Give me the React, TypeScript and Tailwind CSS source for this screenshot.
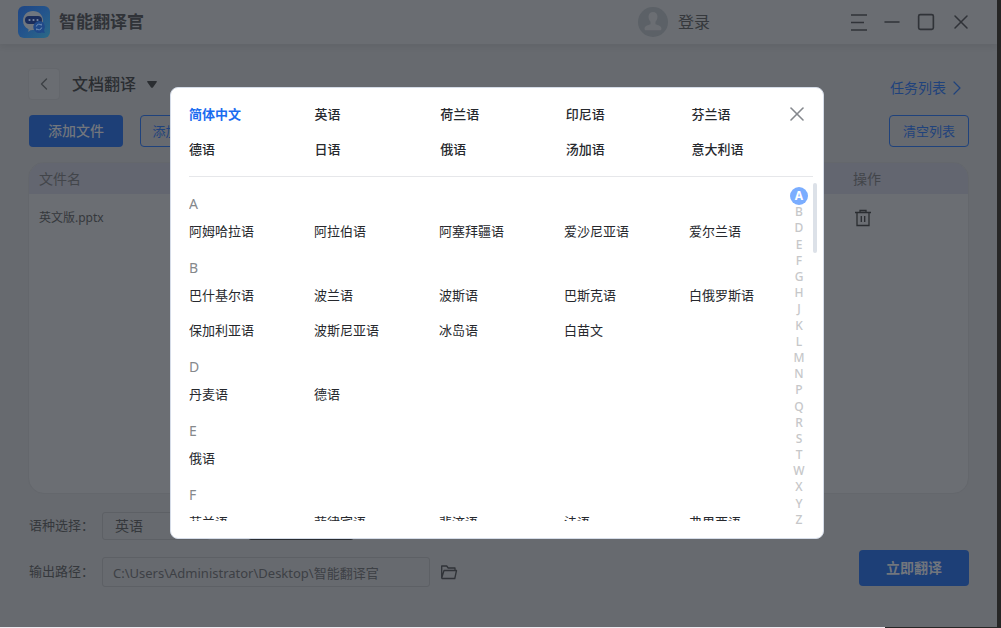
import { ChevronLeft, ChevronRight, Minus, Square, X } from "lucide-react";

const COMMON = [
  "简体中文", "英语", "荷兰语", "印尼语", "芬兰语",
  "德语", "日语", "俄语", "汤加语", "意大利语",
];

const GROUPS = [
  { letter: "A", items: ["阿姆哈拉语", "阿拉伯语", "阿塞拜疆语", "爱沙尼亚语", "爱尔兰语"] },
  {
    letter: "B",
    items: [
      "巴什基尔语", "波兰语", "波斯语", "巴斯克语", "白俄罗斯语",
      "保加利亚语", "波斯尼亚语", "冰岛语", "白苗文",
    ],
  },
  { letter: "D", items: ["丹麦语", "德语"] },
  { letter: "E", items: ["俄语"] },
  { letter: "F", items: ["芬兰语", "菲律宾语", "斐济语", "法语", "弗里西语"] },
];

const LETTERS = "ABDEFGHJKLMNPQRSTWXYZ".split("");

function Logo() {
  return (
    <svg viewBox="0 0 32 32" className="size-8" aria-hidden="true">
      <defs>
        <linearGradient id="logo-bg" x1="0" y1="0" x2="1" y2="1">
          <stop offset="0" stopColor="#1f4684" />
          <stop offset="0.5" stopColor="#23548c" />
          <stop offset="1" stopColor="#2c6a86" />
        </linearGradient>
      </defs>
      <rect width="32" height="32" rx="6" fill="url(#logo-bg)" />
      <path
        d="M15 5c6 0 10 4.200 10 9.500S21 24 15 24l-2.500.2-2.200 1.800.2-2.800C7 21.500 5 18.800 5 14.800 5 9.200 9 5 15 5Z"
        fill="#6f767f"
      />
      <rect x="7" y="10" width="17" height="8" rx="4" fill="#1a2d5c" />
      <g fill="#7887a4">
        <circle cx="11.500" cy="14" r="1.100" />
        <circle cx="15.500" cy="14" r="1.100" />
        <circle cx="19.500" cy="14" r="1.100" />
      </g>
      <path d="M21 15a6 6 0 0 1 5 9.300l.8 2.700-2.900-.6A6 6 0 1 1 21 15Z" fill="#204989" />
      <path
        d="M18.300 20.500a2.800 2.800 0 0 1 5-1.200v-1.500M23.700 21.500a2.800 2.800 0 0 1-5 1.200v1.500"
        fill="none"
        stroke="#6e8db5"
        strokeWidth="1"
      />
    </svg>
  );
}

function Avatar() {
  return (
    <svg viewBox="0 0 30 30" className="size-[30px]" aria-hidden="true">
      <circle cx="15" cy="15" r="15" fill="#5c6167" />
      <path
        d="M15 5c2.700 0 4.500 2 4.500 4.600 0 2.200-.8 4-2 5.200v2.400c2.500.8 6 1.600 6 4.500 0 .9-.5 1.500-1.300 1.500H7.800c-.8 0-1.300-.6-1.300-1.500 0-2.900 3.500-3.700 6-4.500v-2.400c-1.200-1.200-2-3-2-5.200C10.500 7 12.300 5 15 5Z"
        fill="#6b6e73"
      />
    </svg>
  );
}

function TitleBar() {
  return (
    <header className="flex h-11 shrink-0 items-center bg-[#6a6d72] pr-[27px] pl-[18px] shadow-[0_3px_6px_rgba(0,0,0,0.06)]">
      <Logo />
      <h1 className="ml-[9px] text-[17px] font-bold text-[#303338]">智能翻译官</h1>
      <button className="ml-auto flex items-center gap-[10px] text-base text-[#35383c]">
        <Avatar />
        登录
      </button>
      <div className="ml-[140px] flex items-center gap-[17px] text-[#303338]">
        <button aria-label="菜单">
          <svg viewBox="0 0 17 18" className="h-[18px] w-[17px]" stroke="currentColor" strokeWidth="1.500">
            <path d="M1 2h16M1 9.500h13M1 17h16" />
          </svg>
        </button>
        <button aria-label="最小化">
          <Minus className="h-[18px] w-4" viewBox="4 3 16 18" strokeWidth={1.5} />
        </button>
        <button aria-label="最大化">
          <Square className="size-[18px]" viewBox="1 1 22 22" strokeWidth={2} rx={1} />
        </button>
        <button aria-label="关闭">
          <X className="size-[18px]" viewBox="3 3 18 18" strokeWidth={1.5} />
        </button>
      </div>
    </header>
  );
}

function FileTable() {
  return (
    <div className="mt-[15px] min-h-[332px] flex-1 overflow-hidden rounded-2xl border border-[#64676c] bg-[#6b6e73]">
      <table className="w-full table-fixed text-left">
        <thead className="bg-[#636670] text-sm text-[#42454a]">
          <tr className="h-[31px]">
            <th className="pl-[10px] font-normal">文件名</th>
            <th className="w-[115px] font-normal">操作</th>
          </tr>
        </thead>
        <tbody className="text-xs text-[#35383c]">
          <tr className="h-12">
            <td className="pl-[10px]">英文版.pptx</td>
            <td>
              <button aria-label="删除" className="ml-px block">
                <svg viewBox="0 0 18 18" className="size-[18px]" fill="none" stroke="#2a2d31" strokeWidth="1.300">
                  <path d="M1 3.500h16M6 3.500V1.500h6v2M3 3.500V16.500h12V3.500M7.300 7v6M10.700 7v6" />
                </svg>
              </button>
            </td>
          </tr>
        </tbody>
      </table>
    </div>
  );
}

function OutputForm() {
  return (
    <form className="mt-[18px] flex items-end justify-between pl-px">
      <div className="flex flex-col gap-[17px] text-[13px] text-[#35383c]">
        <div className="flex items-center">
          <label htmlFor="source" className="w-[73px]">语种选择：</label>
          <select
            id="source"
            className="h-7 w-[108px] appearance-none rounded-[3px] border border-[#5d6065] pl-3 text-sm"
          >
            <option>英语</option>
          </select>
          <select
            aria-label="目标语言"
            className="ml-[38px] h-7 w-[106px] appearance-none rounded-[3px] border border-[#2a2d31] pl-3 text-sm"
          >
            <option>简体中文</option>
          </select>
        </div>
        <div className="flex items-center">
          <label htmlFor="path" className="w-[73px]">输出路径：</label>
          <input
            id="path"
            readOnly
            value="C:\Users\Administrator\Desktop\智能翻译官"
            className="h-[30px] w-[328px] rounded-[3px] border border-[#5d6065] px-[10px] text-[13px] text-[#3d4045]"
          />
          <button type="button" aria-label="打开文件夹" className="ml-[10px]">
            <svg viewBox="0 0 18 18" className="size-[18px]" fill="none" stroke="#303338" strokeWidth="1.300" strokeLinejoin="round">
              <path d="M1.700 15V3h5l1.500 2H15v2.500M1.700 15l2.300-7.500h12.500L14.800 15.500H2Z" />
            </svg>
          </button>
        </div>
      </div>
      <button type="button" className="mb-px h-9 w-[110px] rounded bg-[#1d3f77] text-sm font-bold text-[#72767d]">
        立即翻译
      </button>
    </form>
  );
}

function LanguageDialog() {
  return (
    <div
      role="dialog"
      aria-label="选择语种"
      className="relative flex h-[452px] w-[654px] flex-col rounded-lg border border-[#d5dce8] bg-white text-[13px] text-[#26282d]"
    >
      <div className="pt-[9px] pr-[6px] pl-[18px]">
        <div className="grid grid-cols-5">
          {COMMON.map((name, i) => (
            <button
              key={name}
              className={i === 0 ? "h-[35px] text-left font-bold text-[#1a6cf0]" : "h-[35px] text-left font-medium"}
            >
              {name}
            </button>
          ))}
        </div>
      </div>
      <button aria-label="关闭" className="absolute top-[18px] right-[18px] text-[#85888d]">
        <X className="size-4" viewBox="4 4 16 16" strokeWidth={1.6} />
      </button>
      <div className="mt-[9px] mr-[10px] ml-[18px] border-t border-[#e6e7ea]" />
      <div className="flex min-h-0 flex-1 pr-[6px] pl-[18px]">
        <div className="mb-[17px] flex flex-1 flex-col gap-[9px] overflow-hidden pt-[17px]">
          {GROUPS.map((group) => (
            <section key={group.letter} className="shrink-0">
              <h2 className="h-5 text-sm leading-5 text-[#85888c]">{group.letter}</h2>
              <div className="grid grid-cols-[repeat(5,125px)]">
                {group.items.map((name) => (
                  <button key={name} className="h-[35px] text-left">
                    {name}
                  </button>
                ))}
              </div>
            </section>
          ))}
        </div>
        <nav className="flex w-[18px] flex-col pt-[11px] pb-[10px] text-xs font-medium text-[#c6c7c9]">
          {LETTERS.map((letter, i) => (
            <a key={letter} href={`#${letter}`} className="flex min-h-0 flex-1 items-center justify-center">
              {i === 0 ? (
                <span className="flex size-[18px] shrink-0 items-center justify-center rounded-full bg-[#7aadff] font-bold text-white">
                  {letter}
                </span>
              ) : (
                letter
              )}
            </a>
          ))}
        </nav>
        <div className="mt-[6px] ml-[5px] h-[70px] w-1 rounded-full bg-[#dce1e8]" />
      </div>
    </div>
  );
}

export default function App() {
  return (
    <div className="flex min-h-screen flex-col bg-[#262626] font-['Noto_Sans','Noto_Sans_CJK_SC',sans-serif]">
      <div className="relative mr-1 flex flex-1 flex-col bg-[#676a6f]">
        <TitleBar />
        <main className="flex flex-1 flex-col px-7 pt-6 pb-10">
          <div className="flex items-center">
            <button
              aria-label="返回"
              className="flex size-8 items-center justify-center rounded border border-[#64676c] bg-[#6a6d72] text-[#3d4045]"
            >
              <ChevronLeft className="size-5" strokeWidth={1.6} />
            </button>
            <button className="ml-3 flex items-center gap-[11px] text-base font-medium text-[#2a2d31]">
              文档翻译
              <svg viewBox="0 0 10 7" className="h-[7px] w-[10px] fill-current" aria-hidden="true">
                <path d="M.8 0h8.400q1.200.2.400 1.300L5.900 6.400q-.9.900-1.800 0L.4 1.300Q-.4.200.8 0Z" />
              </svg>
            </button>
            <a href="#tasks" className="mt-2 ml-auto flex items-center gap-[3px] pr-1 text-sm text-[#1f427c]">
              任务列表
              <ChevronRight className="size-4" viewBox="4 4 16 16" strokeWidth={1.2} />
            </a>
          </div>
          <div className="mt-[15px] flex items-center gap-[17px] text-sm">
            <button className="ml-px h-8 w-[94px] rounded bg-[#1d3f77] font-medium text-[#72767d]">添加文件</button>
            <button className="h-8 w-[90px] rounded border border-[#1f427c] text-[13px] text-[#1f427c]">
              添加文件夹
            </button>
            <button className="ml-auto h-8 w-20 rounded border border-[#1f427c] text-[13px] text-[#1f427c]">
              清空列表
            </button>
          </div>
          <FileTable />
          <OutputForm />
        </main>
        <div className="absolute inset-0 flex items-center justify-center pr-[3px] pb-px">
          <LanguageDialog />
        </div>
      </div>
      <div className="h-px w-[885px] bg-[#efe9ef]" />
    </div>
  );
}
